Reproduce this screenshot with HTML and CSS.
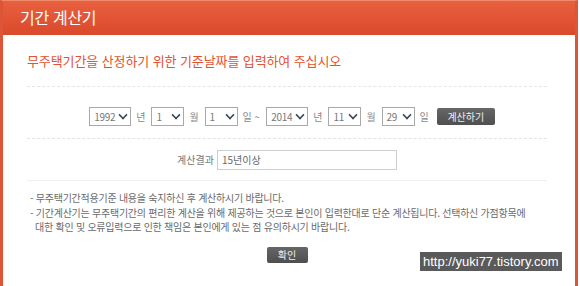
FILE: index.html
```html
<!DOCTYPE html>
<html lang="ko">

<head>
    <meta charset="UTF-8">
    <title>기간 계산기</title>
    <link rel="stylesheet" href="styles.css">
</head>

<body>
    <div class="win">
        <div class="head">기간 계산기</div>
        <div class="body">
            <h2 class="lead">무주택기간을 산정하기 위한 기준날짜를 입력하여 주십시오</h2>

            <div class="date-row">
                <span class="sel w-year">1992<i class="arr"></i></span>
                <span class="unit">년</span>
                <span class="sel w-small">1<i class="arr"></i></span>
                <span class="unit">월</span>
                <span class="sel w-small">1<i class="arr"></i></span>
                <span class="unit">일 ~</span>
                <span class="sel w-year">2014<i class="arr"></i></span>
                <span class="unit">년</span>
                <span class="sel w-small">11<i class="arr"></i></span>
                <span class="unit">월</span>
                <span class="sel w-small">29<i class="arr"></i></span>
                <span class="unit">일</span>
                <button class="btn btn-calc">계산하기</button>
            </div>

            <div class="result-row">
                <span class="label">계산결과</span>
                <span class="field">15년이상</span>
            </div>

            <ul class="notes">
                <li>- 무주택기간적용기준 내용을 숙지하신 후 계산하시기 바랍니다.</li>
                <li>- 기간계산기는 무주택기간의 편리한 계산을 위해 제공하는 것으로 본인이 입력한대로 단순 계산됩니다. 선택하신 가점항목에<br>대한 확인 및 오류입력으로 인한 책임은 본인에게 있는 점 유의하시기 바랍니다.</li>
            </ul>

            <div class="ok-row">
                <button class="btn btn-ok">확인</button>
            </div>
        </div>
    </div>

    <div class="mark">http://yuki77.tistory.com</div>
</body>

</html>
```

FILE: styles.css
```css
* {
    box-sizing: border-box;
}

body {
    margin: 0;
    background-color: #fff;
    font-family: "Noto Sans CJK KR", "Noto Sans", sans-serif;
    color: #666;
    position: relative;
    height: 286px;
    overflow: hidden;
}

.win {
    width: 578px;
    height: 300px;
    border-left: 3px solid #dc5536;
    border-right: 3px solid #dc5536;
    border-top: 1px solid #f08a6c;
}

.head {
    height: 34px;
    padding-left: 17px;
    background: linear-gradient(#e9603f, #d9492b);
    color: #fff;
    font-size: 16px;
    line-height: 33px;
    letter-spacing: -0.3px;
}

.body {
    padding: 0 28px 0 24px;
}

.lead {
    margin: 0;
    padding: 15px 0 15px 0;
    border-bottom: 1px dashed #e6e6e6;
    color: #e4522f;
    font-size: 13px;
    font-weight: normal;
    line-height: 21px;
    letter-spacing: -0.1px;
}

.date-row {
    display: flex;
    align-items: center;
    justify-content: center;
    height: 52px;
    padding: 8px 0 0 10px;
    border-bottom: 1px dashed #e3e3e3;
    font-size: 10px;
    color: #888;
}

.sel {
    display: flex;
    align-items: center;
    justify-content: space-between;
    height: 19px;
    padding: 0 3px 0 4px;
    border: 1px solid #a9a9a9;
    font-size: 10px;
    color: #777;
    letter-spacing: -0.3px;
}

.w-year {
    width: 42px;
}

.w-small {
    width: 33px;
}

.arr {
    width: 8px;
    height: 8px;
    border-right: 2px solid #3b4757;
    border-bottom: 2px solid #3b4757;
    transform: translateY(-2px) rotate(45deg) scale(0.8);
}

.unit {
    margin: 0 6px 0 5px;
}

.btn {
    border: none;
    border-radius: 2px;
    background: linear-gradient(#666, #4f4f4f);
    color: #eee;
    font-family: inherit;
    font-size: 10px;
    padding: 0;
    cursor: pointer;
}

.btn-calc {
    width: 58px;
    height: 17px;
    margin-left: 2px;
}

.result-row {
    display: flex;
    align-items: center;
    justify-content: center;
    height: 42px;
    border-bottom: 1px solid #f0f0f0;
    font-size: 10px;
}

.label {
    margin-right: 3px;
    color: #777;
}

.field {
    width: 180px;
    height: 20px;
    padding-left: 4px;
    border: 1px solid #cfcfcf;
    line-height: 18px;
    color: #666;
}

.notes {
    list-style: none;
    margin: 0;
    padding: 10px 0 0 3px;
    font-size: 10px;
    line-height: 14.5px;
    letter-spacing: -0.25px;
    color: #6a6a6a;
}

.notes li {
    padding-left: 5px;
    text-indent: -5px;
}

.ok-row {
    display: flex;
    justify-content: center;
    padding-top: 12px;
}

.btn-ok {
    width: 41px;
    height: 16px;
}

.mark {
    position: absolute;
    left: 420px;
    top: 252px;
    padding: 0 3px;
    height: 19px;
    background-color: #5a5a5a;
    color: #fff;
    font-family: "Liberation Sans", Arial, sans-serif;
    font-size: 13px;
    line-height: 19px;
}
```
